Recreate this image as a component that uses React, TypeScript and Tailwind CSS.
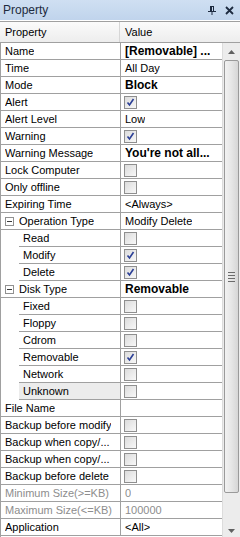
import React from 'react';

type Row = {
  name: string;
  value?: string;
  bold?: boolean;
  check?: boolean;
  child?: boolean;
  expander?: boolean;
  disabled?: boolean;
  selected?: boolean;
};

const rows: Row[] = [
  { name: 'Name', value: '[Removable] ...', bold: true },
  { name: 'Time', value: 'All Day' },
  { name: 'Mode', value: 'Block', bold: true },
  { name: 'Alert', check: true },
  { name: 'Alert Level', value: 'Low' },
  { name: 'Warning', check: true },
  { name: 'Warning Message', value: "You're not all...", bold: true },
  { name: 'Lock Computer', check: false },
  { name: 'Only offline', check: false },
  { name: 'Expiring Time', value: '<Always>' },
  { name: 'Operation Type', value: 'Modify Delete', expander: true },
  { name: 'Read', check: false, child: true },
  { name: 'Modify', check: true, child: true },
  { name: 'Delete', check: true, child: true },
  { name: 'Disk Type', value: 'Removable', bold: true, expander: true },
  { name: 'Fixed', check: false, child: true },
  { name: 'Floppy', check: false, child: true },
  { name: 'Cdrom', check: false, child: true },
  { name: 'Removable', check: true, child: true },
  { name: 'Network', check: false, child: true },
  { name: 'Unknown', check: false, child: true, selected: true },
  { name: 'File Name', value: '' },
  { name: 'Backup before modify', check: false },
  { name: 'Backup when copy/...', check: false },
  { name: 'Backup when copy/...', check: false },
  { name: 'Backup before delete', check: false },
  { name: 'Minimum Size(>=KB)', value: '0', disabled: true },
  { name: 'Maximum Size(<=KB)', value: '100000', disabled: true },
  { name: 'Application', value: '<All>' },
];

function CheckBox({ checked }: { checked: boolean }) {
  return (
    <div className="w-[13px] h-[13px] border border-[#8f8f8f] bg-gradient-to-br from-[#dcdcdc] to-[#f8f8f8] flex items-center justify-center">
      {checked && (
        <svg width="11" height="11" viewBox="0 0 11 11">
          <path d="M2.5 5.5 L4.5 8 L8.5 2" fill="none" stroke="#2b3f96" strokeWidth="1.6" />
        </svg>
      )}
    </div>
  );
}

function Expander() {
  return (
    <div className="w-[9px] h-[9px] border border-[#919191] bg-white flex items-center justify-center">
      <div className="w-[5px] h-px bg-[#3a3a3a]" />
    </div>
  );
}

function GridRow({ row }: { row: Row }) {
  const text = row.disabled ? 'text-[#8d8d8d]' : 'text-black';
  return (
    <div className="flex h-[17px]">
      <div className="w-[120px] flex border-r border-[#a0a0a0]">
        {row.child ? (
          <>
            <div className="w-[18px] shrink-0" />
            <div
              className={`flex-1 flex items-center pl-[4px] border-b border-[#a0a0a0] ${text} ${
                row.selected ? 'bg-[#ececec]' : ''
              }`}
            >
              {row.name}
            </div>
          </>
        ) : (
          <div className={`flex-1 flex items-center border-b border-[#a0a0a0] ${text}`}>
            {row.expander ? (
              <div className="w-[18px] shrink-0 flex items-center justify-start pl-[4px]">
                <Expander />
              </div>
            ) : (
              <div className="w-[4px] shrink-0" />
            )}
            <span className="truncate">{row.name}</span>
          </div>
        )}
      </div>
      <div className={`flex-1 flex items-center border-b border-[#a0a0a0] ${text}`}>
        {row.check !== undefined ? (
          <div className="pl-[3px]">
            <CheckBox checked={row.check} />
          </div>
        ) : (
          <span className={`pl-[4px] truncate ${row.bold ? 'font-bold text-[12px]' : ''}`}>{row.value}</span>
        )}
      </div>
    </div>
  );
}

function ScrollBar() {
  return (
    <div className="w-[18px] h-full bg-[#ececec] border-l border-[#dcdcdc] flex flex-col items-center">
      <div className="h-[17px] w-full flex items-center justify-center">
        <svg width="7" height="4" viewBox="0 0 7 4">
          <path d="M0 4 L3.5 0 L7 4 Z" fill="#606060" />
        </svg>
      </div>
      <div className="w-[15px] h-[433px] rounded-[2px] border border-[#9a9a9a] bg-gradient-to-r from-[#f2f2f2] via-[#e6e6e6] to-[#d6d6d6] flex items-center justify-center">
        <div className="flex flex-col gap-[2px]">
          <div className="w-[7px] h-px bg-[#6b6b6b]" />
          <div className="w-[7px] h-px bg-[#6b6b6b]" />
          <div className="w-[7px] h-px bg-[#6b6b6b]" />
          <div className="w-[7px] h-px bg-[#6b6b6b]" />
        </div>
      </div>
      <div className="flex-1 w-full flex items-end justify-center pb-[4px]">
        <svg width="7" height="4" viewBox="0 0 7 4">
          <path d="M0 0 L3.5 4 L7 0 Z" fill="#606060" />
        </svg>
      </div>
    </div>
  );
}

export default function App() {
  return (
    <div
      className="w-[240px] h-[537px] bg-white flex flex-col overflow-hidden text-[11px]"
      style={{ fontFamily: '"Liberation Sans", Arial, sans-serif' }}
    >
      <div className="h-[20px] shrink-0 flex items-center justify-between pl-[3px] pr-[6px] bg-gradient-to-b from-[#cfdff2] to-[#c0d4ec] text-[#1e2b40] text-[12px]">
        <span>Property</span>
        <div className="flex items-center gap-[9px]">
          <svg width="8" height="9" viewBox="0 0 8 9">
            <path d="M2 0 H6 V5 H8 V6 H4.5 V9 H3.5 V6 H0 V5 H2 Z" fill="#1e2b40" />
            <path d="M4 1 H5 V5 H4 Z" fill="#c6d8ee" />
          </svg>
          <svg width="9" height="9" viewBox="0 0 9 9">
            <path d="M1 1 L8 8 M8 1 L1 8" stroke="#1e2b40" strokeWidth="1.8" />
          </svg>
        </div>
      </div>
      <div className="h-px shrink-0 bg-white" />
      <div className="h-[22px] shrink-0 flex border-y border-[#a0a0a0] bg-gradient-to-b from-[#fbfbfb] to-[#ededed] text-black">
        <div className="w-[120px] flex items-center pl-[5px] border-r border-[#d6d6d6]">Property</div>
        <div className="flex-1 flex items-center pl-[5px]">Value</div>
      </div>
      <div className="flex flex-1 min-h-0">
        <div className="w-[222px] border-l border-[#a0a0a0]">
          {rows.map((row, i) => (
            <GridRow key={i} row={row} />
          ))}
        </div>
        <ScrollBar />
      </div>
    </div>
  );
}
